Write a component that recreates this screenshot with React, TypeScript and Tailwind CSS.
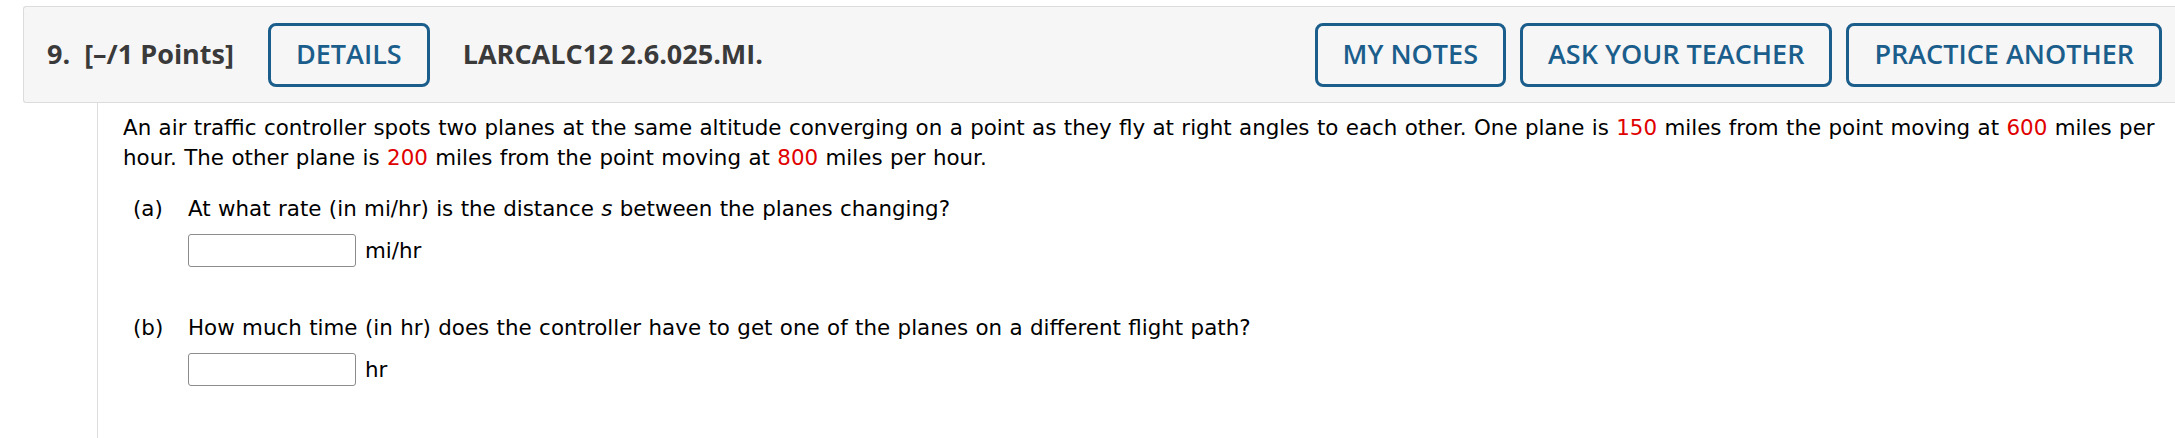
import React from "react";

const btn =
  "h-[64px] rounded-[8px] border-[3px] border-[#1b5e8c] px-[25px] text-[27px] font-semibold uppercase text-[#1b5e8c]";

function Num({ children }: { children: React.ReactNode }) {
  return <span className="text-[#e00000]">{children}</span>;
}

function Answer({ unit }: { unit: string }) {
  return (
    <div className="mt-[10px] flex items-center pl-[55px]">
      <input
        type="text"
        className="h-[33px] w-[168px] rounded-[3px] border border-[#8c8c8c] bg-white"
      />
      <span className="ml-[9px]">{unit}</span>
    </div>
  );
}

export default function App() {
  return (
    <div className="h-[438px] w-[2175px] overflow-hidden bg-white pl-[23px] pt-[6px]">
      <header
        className="flex h-[97px] items-center rounded-l-[3px] border border-r-0 border-[#dcdcdc] bg-[#f6f6f6] pl-[23px] pr-[13px] text-[27px] font-bold text-[#3a3a3a]"
        style={{ fontFamily: '"Open Sans", sans-serif' }}
      >
        <span className="whitespace-pre">9.  [–/1 Points]</span>
        <button type="button" className={`${btn} ml-[34px]`}>
          details
        </button>
        <span className="ml-[33px]">LARCALC12 2.6.025.MI.</span>
        <div className="ml-auto flex gap-[14px]">
          <button type="button" className={btn}>
            my notes
          </button>
          <button type="button" className={btn}>
            ask your teacher
          </button>
          <button type="button" className={btn}>
            practice another
          </button>
        </div>
      </header>

      <div
        className="ml-[74px] h-[400px] border-l border-[#dddddd] pl-[25px] pr-[10px] pt-[10px] text-[21.4px] leading-[30px] text-black [word-spacing:0.6px]"
        style={{ fontFamily: 'Verdana, "DejaVu Sans", sans-serif' }}
      >
        <p>
          An air traffic controller spots two planes at the same altitude converging on a point as they fly at
          right angles to each other. One plane is <Num>150</Num> miles from the point moving at <Num>600</Num>{" "}
          miles per hour. The other plane is <Num>200</Num> miles from the point moving at <Num>800</Num> miles
          per hour.
        </p>

        <div className="mt-[21px] pl-[10px]">
          <div className="flex">
            <span className="w-[55px] shrink-0">(a)</span>
            <span>
              At what rate (in mi/hr) is the distance <i>s</i> between the planes changing?
            </span>
          </div>
          <Answer unit="mi/hr" />
        </div>

        <div className="mt-[46px] pl-[10px]">
          <div className="flex">
            <span className="w-[55px] shrink-0">(b)</span>
            <span>How much time (in hr) does the controller have to get one of the planes on a different flight path?</span>
          </div>
          <Answer unit="hr" />
        </div>
      </div>
    </div>
  );
}
